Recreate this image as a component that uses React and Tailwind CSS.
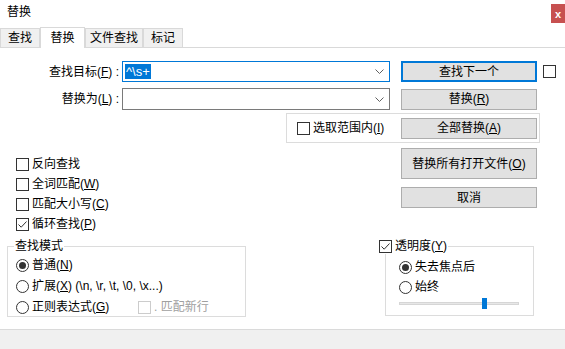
import React from 'react';

const Mn = ({ k }) => (
  <span>
    (<u className="underline-offset-1">{k}</u>)
  </span>
);

const Check = ({ checked, disabled }) => (
  <span
    className={`flex h-[13px] w-[13px] shrink-0 items-center justify-center border bg-white ${
      disabled ? 'border-[#cccccc]' : 'border-[#333333]'
    }`}
  >
    {checked && (
      <svg width="11" height="11" viewBox="0 0 11 11">
        <path d="M1.5 5.5 L4.2 8.2 L9.5 2.5" fill="none" stroke="#333333" strokeWidth="1" />
      </svg>
    )}
  </span>
);

const Radio = ({ on }) => (
  <span className="flex h-[13px] w-[13px] shrink-0 items-center justify-center rounded-full border border-[#333333] bg-white">
    {on && <span className="h-[7px] w-[7px] rounded-full bg-[#333333]" />}
  </span>
);

const Chevron = () => (
  <svg width="9" height="5" viewBox="0 0 9 5" className="mr-[5px]">
    <path d="M0.5 0.5 L4.5 4.5 L8.5 0.5" fill="none" stroke="#606060" strokeWidth="1" />
  </svg>
);

const Btn = ({ children, tall, focus }) => (
  <div
    className={`flex w-[136px] shrink-0 items-center justify-center bg-[#e1e1e1] ${tall ? 'h-[31px]' : 'h-[21px]'} ${
      focus ? 'border-2 border-[#0078d7]' : 'border border-[#adadad]'
    }`}
  >
    {children}
  </div>
);

const Tab = ({ label, w, active }) => (
  <div
    className={`flex items-center justify-center border-x border-t border-[#d9d9d9] ${w} ${
      active ? '-mb-px h-[21px] bg-white' : 'h-[19px] bg-[#f0f0f0]'
    }`}
  >
    {label}
  </div>
);

export default function App() {
  return (
    <div className="flex h-[349px] w-[565px] flex-col overflow-hidden bg-white text-[12px] leading-[16px] text-black font-['Liberation_Sans','Noto_Sans_CJK_SC',sans-serif]">
      {/* title */}
      <div className="flex h-[27px] items-start justify-between">
        <span className="ml-[7px] mt-[4px]">替换</span>
        <div className="mt-[4px] flex h-[19px] w-[14px] items-center justify-center bg-[#c75050] text-[11px] font-bold text-white">
          x
        </div>
      </div>

      {/* tabs */}
      <div className="flex h-[21px] items-end border-b border-[#d9d9d9]">
        <Tab label="查找" w="w-[40px]" />
        <Tab label="替换" w="w-[45px]" active />
        <Tab label="文件查找" w="w-[58px]" />
        <Tab label="标记" w="w-[40px]" />
      </div>

      {/* find row */}
      <div className="mt-[13px] flex h-[21px] items-center">
        <div className="w-[119px] text-right">
          查找目标<Mn k="F" /> :
        </div>
        <div className="ml-[3px] flex h-[21px] w-[268px] items-center justify-between border border-[#0078d7]">
          <span className="ml-[2px] bg-[#0078d7] px-[1px] text-[13px] leading-[15px] text-white">^\s+</span>
          <Chevron />
        </div>
        <div className="ml-[11px]">
          <Btn focus>查找下一个</Btn>
        </div>
        <div className="ml-[6px]">
          <Check />
        </div>
      </div>

      {/* replace row */}
      <div className="mt-[6px] flex h-[22px] items-center">
        <div className="w-[119px] text-right">
          替换为<Mn k="L" /> :
        </div>
        <div className="ml-[3px] flex h-[22px] w-[268px] items-center justify-end border border-[#7a7a7a]">
          <Chevron />
        </div>
        <div className="ml-[11px]">
          <Btn>
            替换<Mn k="R" />
          </Btn>
        </div>
      </div>

      {/* in selection group */}
      <div className="mt-[3px] pl-[286px]">
        <div className="flex h-[30px] w-[254px] items-center border border-[#dcdcdc]">
          <div className="flex w-[114px] items-center pl-[10px]">
            <Check />
            <span className="ml-[3px]">
              选取范围内<Mn k="I" />
            </span>
          </div>
          <Btn>
            全部替换<Mn k="A" />
          </Btn>
        </div>
      </div>

      {/* options + buttons */}
      <div className="mt-[5px] flex">
        <div className="flex w-[401px] flex-col pl-[16px] pt-[10px]">
          {[
            ['反向查找', null, false],
            ['全词匹配', 'W', false],
            ['匹配大小写', 'C', false],
            ['循环查找', 'P', true],
          ].map(([t, k, c]) => (
            <div key={t} className="flex h-[20px] items-start">
              <Check checked={c} />
              <span className="ml-[3px] -mt-[2px]">
                {t}
                {k && <Mn k={k} />}
              </span>
            </div>
          ))}
        </div>
        <div className="flex flex-col">
          <Btn tall>
            替换所有打开文件<Mn k="O" />
          </Btn>
          <div className="mt-[8px]">
            <Btn>取消</Btn>
          </div>
        </div>
      </div>

      {/* bottom groups */}
      <div className="flex">
        <fieldset className="ml-[7px] h-[79px] w-[239px] border border-[#dcdcdc]">
          <legend className="ml-[6px] px-[1px]">查找模式</legend>
          <div className="flex flex-col gap-[1px] pl-[8px] pt-[1px]">
            <div className="flex h-[20px] items-center">
              <Radio on />
              <span className="ml-[3px]">
                普通<Mn k="N" />
              </span>
            </div>
            <div className="flex h-[20px] items-center">
              <Radio />
              <span className="ml-[3px]">
                扩展<Mn k="X" /> (\n, \r, \t, \0, \x...)
              </span>
            </div>
            <div className="flex h-[20px] items-center">
              <Radio />
              <span className="ml-[3px] w-[106px]">
                正则表达式<Mn k="G" />
              </span>
              <Check disabled />
              <span className="ml-[3px] text-[#a0a0a0]">. 匹配新行</span>
            </div>
          </div>
        </fieldset>

        <fieldset className="ml-[139px] h-[78px] w-[149px] border border-[#dcdcdc]">
          <legend className="-ml-[7px] flex items-center pr-[1px]">
            <Check checked />
            <span className="ml-[3px]">
              透明度<Mn k="Y" />
            </span>
          </legend>
          <div className="flex flex-col pl-[13px] pt-[3px]">
            <div className="flex h-[20px] items-center">
              <Radio on />
              <span className="ml-[3px]">失去焦点后</span>
            </div>
            <div className="flex h-[20px] items-center">
              <Radio />
              <span className="ml-[3px]">始终</span>
            </div>
            <div className="relative mt-[1px] h-[11px] w-[120px]">
              <div className="absolute left-0 right-0 top-[4px] h-[3px] border border-[#d6d6d6] bg-[#e7e7e7]" />
              <div className="absolute left-[83px] top-0 h-[11px] w-[5px] bg-[#0078d7]" />
            </div>
          </div>
        </fieldset>
      </div>

      {/* status bar */}
      <div className="mt-auto h-[20px] border-t border-[#dadada] bg-[#f0f0f0]" />
    </div>
  );
}
